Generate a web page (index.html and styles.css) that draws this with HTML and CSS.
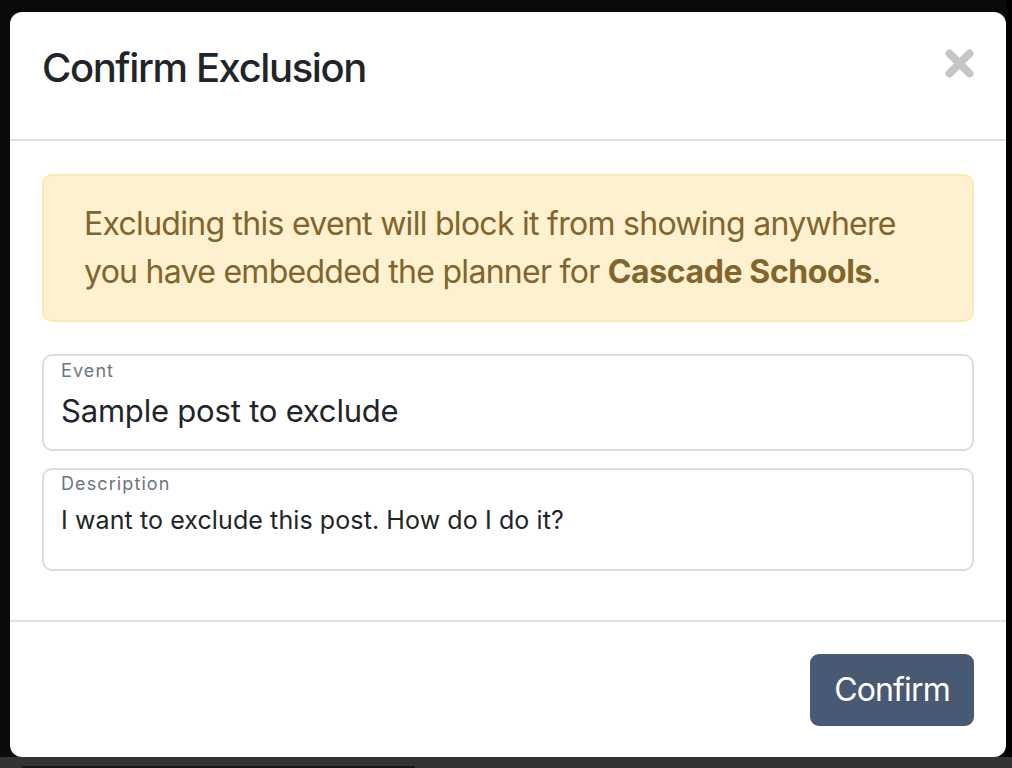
FILE: index.html
```html
<!DOCTYPE html>
<html lang="en">
<head>
<meta charset="utf-8">
<title>Confirm Exclusion</title>
<link rel="stylesheet" href="styles.css">
</head>
<body>
<div class="modal">
  <div class="modal-header">
    <h5 class="modal-title">Confirm Exclusion</h5>
    <button class="close" type="button" aria-label="Close">
      <svg width="29" height="29" viewBox="0 0 29 29"><path d="M4.5 4.5 L24.5 24.5 M24.5 4.5 L4.5 24.5" stroke="#c6c6c6" stroke-width="8" stroke-linecap="round" fill="none"/></svg>
    </button>
  </div>
  <div class="modal-body">
    <div class="alert">Excluding this event will block it from showing anywhere you have embedded the planner for <strong>Cascade Schools</strong>.</div>
    <div class="field field-event">
      <div class="field-label">Event</div>
      <div class="field-value">Sample post to exclude</div>
    </div>
    <div class="field field-desc">
      <div class="field-label">Description</div>
      <div class="field-value">I want to exclude this post. How do I do it?</div>
    </div>
  </div>
  <div class="modal-footer">
    <button class="btn" type="button">Confirm</button>
  </div>
</div>
</body>
</html>
```
FILE: styles.css
```css
html, body {
  margin: 0;
  height: 100%;
  overflow: hidden;
}
body {
  font-family: Inter, "Liberation Sans", sans-serif;
  color: #212529;
  background:
    linear-gradient(#161616, #161616) 22px 766px / 393px 2px no-repeat,
    linear-gradient(to bottom, transparent 757px, #333 757px),
    linear-gradient(to right, transparent 1006px, #000 1006px),
    #0a0a0a;
}
.modal {
  box-sizing: border-box;
  width: 996px;
  height: 745px;
  margin: 12px 0 0 10px;
  background: #fff;
  border-radius: 12px;
  display: flex;
  flex-direction: column;
}
.modal-header {
  box-sizing: border-box;
  height: 129px;
  padding: 26px 32px 0 32px;
  border-bottom: 2px solid #dee2e6;
  display: flex;
  justify-content: space-between;
  align-items: flex-start;
}
.modal-title {
  margin: 0;
  font-size: 40px;
  font-weight: 500;
  line-height: 60px;
  color: #212529;
  letter-spacing: -1.4px;
}
.close {
  margin-top: 11px;
  padding: 0;
  border: 0;
  background: none;
  width: 29px;
  height: 29px;
  display: block;
}
.close svg { display: block; }
.modal-body {
  padding: 33px 32px 49px;
  flex: 1;
}
.alert {
  box-sizing: border-box;
  height: 148px;
  padding: 24px 40px;
  background: #fdf1cf;
  border: 2px solid #fbe8b3;
  border-radius: 10px;
  color: #83642a;
  font-size: 32px;
  line-height: 48px;
  letter-spacing: -0.72px;
  margin-bottom: 32px;
}
.alert strong {
  font-weight: 700;
  letter-spacing: -0.4px;
}
.field {
  box-sizing: border-box;
  border: 2px solid #dedede;
  border-radius: 10px;
  padding: 5px 17px 0;
}
.field-label {
  font-size: 18px;
  line-height: 20px;
  color: #6c757d;
  letter-spacing: 1.1px;
}
.field-event {
  height: 97px;
  margin-bottom: 17px;
}
.field-event .field-value {
  margin-top: 12px;
  font-size: 31px;
  line-height: 36px;
  letter-spacing: -0.2px;
}
.field-desc {
  height: 103px;
  padding-top: 4px;
}
.field-desc .field-value {
  margin-top: 8px;
  font-size: 25px;
  line-height: 36px;
  letter-spacing: 0.1px;
}
.modal-footer {
  box-sizing: border-box;
  height: 137px;
  border-top: 2px solid #dee2e6;
  padding: 32px;
  display: flex;
  justify-content: flex-end;
  align-items: flex-start;
}
.btn {
  width: 164px;
  height: 72px;
  border: 0;
  border-radius: 9px;
  background: #485973;
  color: #fff;
  font-family: Inter, "Liberation Sans", sans-serif;
  font-size: 32px;
  line-height: 48px;
  letter-spacing: -0.85px;
  padding: 0;
}
```
